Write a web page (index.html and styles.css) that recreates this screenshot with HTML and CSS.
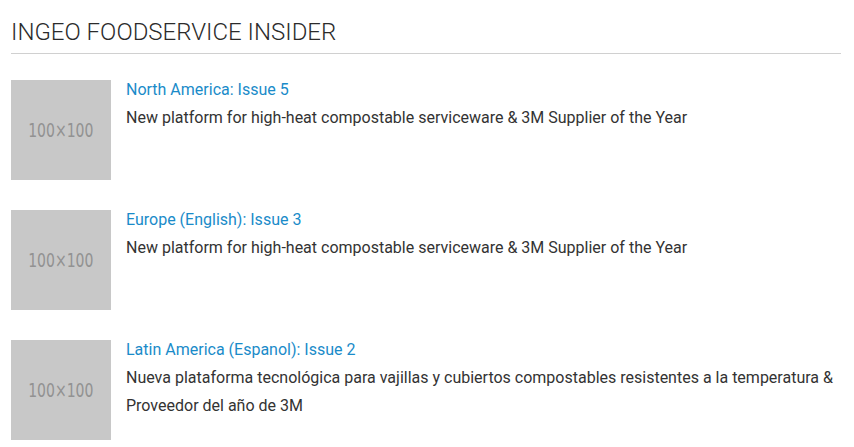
FILE: index.html
```html
<!DOCTYPE html>
<html>
<head>
<meta charset="utf-8">
<link rel="stylesheet" href="styles.css">
</head>
<body>
<div class="page">
  <h1 class="heading">INGEO FOODSERVICE INSIDER</h1>
  <ul class="list">
    <li class="item">
      <div class="thumb"><span class="thumb-label">100×100</span></div>
      <div class="body">
        <a class="title" href="#">North America: Issue 5</a>
        <p class="desc">New platform for high-heat compostable serviceware &amp; 3M Supplier of the Year</p>
      </div>
    </li>
    <li class="item">
      <div class="thumb"><span class="thumb-label">100×100</span></div>
      <div class="body">
        <a class="title" href="#">Europe (English): Issue 3</a>
        <p class="desc">New platform for high-heat compostable serviceware &amp; 3M Supplier of the Year</p>
      </div>
    </li>
    <li class="item">
      <div class="thumb"><span class="thumb-label">100×100</span></div>
      <div class="body">
        <a class="title" href="#">Latin America (Espanol): Issue 2</a>
        <p class="desc">Nueva plataforma tecnológica para vajillas y cubiertos compostables resistentes a la temperatura &amp; Proveedor del año de 3M</p>
      </div>
    </li>
  </ul>
</div>
</body>
</html>
```
FILE: styles.css
```css
html, body {
  margin: 0;
  padding: 0;
  background: #fff;
}
.page {
  padding: 0 13px 0 11px;
  font-family: Roboto, "Liberation Sans", sans-serif;
}
.heading {
  margin: 0;
  padding-top: 18px;
  height: 54px;
  box-sizing: border-box;
  font-size: 24px;
  line-height: 28px;
  font-weight: 300;
  color: #2b2b2b;
  border-bottom: 1px solid #d0d0d0;
}
.list {
  list-style: none;
  margin: 0;
  padding: 26px 0 0;
  display: flex;
  flex-direction: column;
  gap: 30px;
}
.item {
  display: flex;
  gap: 15px;
  align-items: flex-start;
}
.thumb {
  flex: 0 0 100px;
  height: 100px;
  background: #c8c8c8;
  display: flex;
  align-items: center;
  justify-content: center;
}
.thumb-label {
  display: inline-block;
  color: #929292;
  font-family: "DejaVu Sans Condensed", "DejaVu Sans", sans-serif;
  font-stretch: condensed;
  font-size: 19px;
  line-height: 20px;
  transform: scaleX(0.82);
  white-space: nowrap;
}
.body {
  display: flex;
  flex-direction: column;
}
.title {
  font-size: 16px;
  line-height: 20px;
  color: #1a8bc9;
  text-decoration: none;
}
.desc {
  margin: 4px 0 0;
  font-size: 16px;
  line-height: 28px;
  color: #333;
}
```
